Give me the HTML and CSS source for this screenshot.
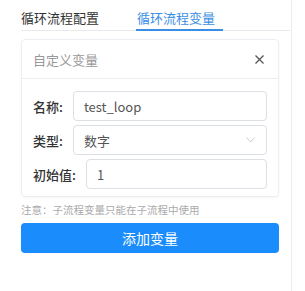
FILE: index.html
```
<!DOCTYPE html>
<html>
<head>
    <meta charset="utf-8" />
    <title>循环流程变量</title>
    <link rel="stylesheet" href="styles.css">
</head>
<body>
    <div class="panel">
        <div class="tabs">
            <div class="tab">循环流程配置</div>
            <div class="tab active">循环流程变量</div>
        </div>
        <div class="card">
            <div class="card-head">
                <span>自定义变量</span>
                <svg class="close" width="9" height="9" viewBox="0 0 9 9">
                    <path d="M0.5 0.5 L8.5 8.5 M8.5 0.5 L0.5 8.5" stroke="#555" stroke-width="1.3" fill="none" />
                </svg>
            </div>
            <div class="card-body">
                <div class="row">
                    <label class="lab" for="name">名称:</label>
                    <input class="ip" type="text" id="name" value="test_loop" />
                </div>
                <div class="row">
                    <label class="lab">类型:</label>
                    <div class="ip sel">
                        <span>数字</span>
                        <svg width="9" height="6" viewBox="0 0 9 6">
                            <path d="M0.5 0.5 L4.5 5 L8.5 0.5" stroke="#c8cbd2" stroke-width="1" fill="none" />
                        </svg>
                    </div>
                </div>
                <div class="row">
                    <label class="lab" for="init">初始值:</label>
                    <input class="ip" type="text" id="init" value="1" />
                </div>
            </div>
        </div>
        <div class="note">注意：子流程变量只能在子流程中使用</div>
        <button class="btn" type="button">添加变量</button>
    </div>
</body>
</html>
```

FILE: styles.css
```
* {
    box-sizing: border-box;
    font-family: "Noto Sans CJK SC", "Liberation Sans", sans-serif;
}

body {
    margin: 0;
    background: #fff;
}

.panel {
    margin-left: 21px;
    width: 271px;
    height: 291px;
    padding-right: 12px;
    border-right: 1px solid #ececec;
}

.tabs {
    display: flex;
    height: 31px;
    border-bottom: 1px solid #e8eaee;
    margin-right: -11px;
}

.tab {
    font-size: 13px;
    line-height: 20px;
    padding-top: 8px;
    color: #333;
}

.tab.active {
    margin-left: 37px;
    padding: 8px 8px 0 1px;
    height: 31px;
    color: #3a8ee6;
    border-bottom: 2px solid #3a8ee6;
}

.card {
    margin-top: 8px;
    border: 1px solid #ebeef2;
    border-radius: 4px;
    box-shadow: 0 1px 3px rgba(0, 0, 0, 0.04);
}

.card-head {
    display: flex;
    align-items: center;
    justify-content: space-between;
    height: 39px;
    padding: 0 14px 0 11px;
    border-bottom: 1px solid #ebeef2;
    font-size: 13px;
    color: #999;
}

.card-body {
    padding: 12px 11px 3px 11px;
}

.row {
    display: flex;
    align-items: center;
    margin-bottom: 4px;
}

.lab {
    flex: none;
    margin-right: 10px;
    font-size: 13px;
    font-weight: 500;
    color: #333;
}

.ip {
    flex: 1;
    min-width: 0;
    height: 30px;
    padding: 0 10px;
    border: 1px solid #dcdfe6;
    border-radius: 4px;
    font-size: 13px;
    color: #555;
    outline: none;
}

.sel {
    display: flex;
    align-items: center;
    justify-content: space-between;
    padding-right: 11px;
}

.note {
    margin-top: 6px;
    font-size: 10.5px;
    line-height: 14px;
    color: #aaa;
}

.btn {
    display: block;
    width: 100%;
    height: 30px;
    margin-top: 6px;
    border: none;
    border-radius: 4px;
    background: #1a8cfb;
    color: #fff;
    font-size: 14px;
}
```
